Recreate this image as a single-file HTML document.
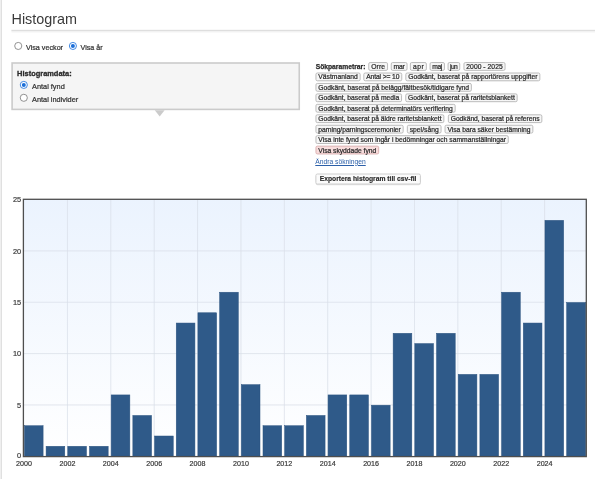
<!DOCTYPE html>
<html><head><meta charset="utf-8"><title>Histogram</title>
<style>
html,body{margin:0;padding:0;background:#fff;}
body{width:603px;height:479px;position:relative;overflow:hidden;font-family:"Liberation Sans",sans-serif;color:#333;}
#wrap{position:absolute;left:0;top:0;width:603px;height:479px;overflow:hidden;will-change:transform;transform:translateZ(0);}
#wrap div{position:absolute;white-space:nowrap;}
svg{position:absolute;left:0;top:0;}
.h{color:#3a3a3a;}
.t{color:#333;-webkit-text-stroke:0.22px #333;}
.lbl{font-weight:bold;color:#2a2a2a;-webkit-text-stroke:0.25px #2a2a2a;}
.tg{color:#2a2a2a;-webkit-text-stroke:0.22px #2a2a2a;}
.lnk{color:#2b5fa8;text-decoration:underline;}
.btn{font-weight:bold;color:#2a2a2a;-webkit-text-stroke:0.15px #2a2a2a;}
.xl{width:40px;text-align:center;font-size:7.15px;line-height:9px;color:#3a3a3a;-webkit-text-stroke:0.2px #3a3a3a;}
.yl{left:0;width:21.2px;text-align:right;font-size:7.4px;line-height:9px;color:#3a3a3a;-webkit-text-stroke:0.2px #3a3a3a;}
</style></head><body><div id="wrap">
<svg width="603" height="479" viewBox="0 0 603 479">
<rect x="0.5" y="0" width="1.5" height="479" fill="#e0e0e0"/>
<defs><linearGradient id="sh" x1="0" y1="0" x2="0" y2="1"><stop offset="0" stop-color="#efefef"/><stop offset="1" stop-color="#ffffff"/></linearGradient><linearGradient id="g" x1="0" y1="0" x2="0" y2="1"><stop offset="0" stop-color="#ebf3fe"/><stop offset="1" stop-color="#ffffff"/></linearGradient></defs>
<rect x="11.4" y="29.8" width="583.6" height="1.2" fill="#dedede"/>
<rect x="11.4" y="31" width="583.6" height="2.4" fill="url(#sh)"/>
<rect x="12.1" y="63.0" width="287.15" height="46.4" fill="#f5f5f5" stroke="#cbcbcb" stroke-width="1.6"/>
<path d="M154.8 110.3 L164.6 110.3 L159.7 116.4 Z" fill="#cbcbcb"/>
<circle cx="18.25" cy="45.95" r="3.55" fill="#fff" stroke="#808080" stroke-width="0.85"/>
<circle cx="72.9" cy="45.95" r="3.55" fill="#fff" stroke="#2f7de0" stroke-width="0.9"/><circle cx="72.9" cy="45.95" r="2.0" fill="#1b6ed8"/>
<circle cx="23.8" cy="84.9" r="3.55" fill="#fff" stroke="#2f7de0" stroke-width="0.9"/><circle cx="23.8" cy="84.9" r="2.0" fill="#1b6ed8"/>
<circle cx="23.8" cy="97.8" r="3.55" fill="#fff" stroke="#808080" stroke-width="0.85"/>
<rect x="368.75" y="62.55" width="18.80" height="7.80" rx="1.4" fill="#f6f6f6" stroke="#b4b4b4" stroke-width="0.9"/>
<rect x="391.25" y="62.55" width="15.80" height="7.80" rx="1.4" fill="#f6f6f6" stroke="#b4b4b4" stroke-width="0.9"/>
<rect x="410.35" y="62.55" width="16.00" height="7.80" rx="1.4" fill="#f6f6f6" stroke="#b4b4b4" stroke-width="0.9"/>
<rect x="430.05" y="62.55" width="14.40" height="7.80" rx="1.4" fill="#f6f6f6" stroke="#b4b4b4" stroke-width="0.9"/>
<rect x="448.05" y="62.55" width="11.70" height="7.80" rx="1.4" fill="#f6f6f6" stroke="#b4b4b4" stroke-width="0.9"/>
<rect x="463.95" y="62.55" width="41.10" height="7.80" rx="1.4" fill="#f6f6f6" stroke="#b4b4b4" stroke-width="0.9"/>
<rect x="315.95" y="73.00" width="44.20" height="7.80" rx="1.4" fill="#f6f6f6" stroke="#b4b4b4" stroke-width="0.9"/>
<rect x="363.85" y="73.00" width="37.90" height="7.80" rx="1.4" fill="#f6f6f6" stroke="#b4b4b4" stroke-width="0.9"/>
<rect x="405.85" y="73.00" width="134.00" height="7.80" rx="1.4" fill="#f6f6f6" stroke="#b4b4b4" stroke-width="0.9"/>
<rect x="315.95" y="83.45" width="155.40" height="7.80" rx="1.4" fill="#f6f6f6" stroke="#b4b4b4" stroke-width="0.9"/>
<rect x="315.95" y="93.90" width="85.60" height="7.80" rx="1.4" fill="#f6f6f6" stroke="#b4b4b4" stroke-width="0.9"/>
<rect x="405.75" y="93.90" width="111.40" height="7.80" rx="1.4" fill="#f6f6f6" stroke="#b4b4b4" stroke-width="0.9"/>
<rect x="315.95" y="104.35" width="139.20" height="7.80" rx="1.4" fill="#f6f6f6" stroke="#b4b4b4" stroke-width="0.9"/>
<rect x="315.95" y="114.80" width="127.90" height="7.80" rx="1.4" fill="#f6f6f6" stroke="#b4b4b4" stroke-width="0.9"/>
<rect x="448.35" y="114.80" width="93.50" height="7.80" rx="1.4" fill="#f6f6f6" stroke="#b4b4b4" stroke-width="0.9"/>
<rect x="315.95" y="125.25" width="87.20" height="7.80" rx="1.4" fill="#f6f6f6" stroke="#b4b4b4" stroke-width="0.9"/>
<rect x="407.35" y="125.25" width="33.70" height="7.80" rx="1.4" fill="#f6f6f6" stroke="#b4b4b4" stroke-width="0.9"/>
<rect x="445.05" y="125.25" width="87.80" height="7.80" rx="1.4" fill="#f6f6f6" stroke="#b4b4b4" stroke-width="0.9"/>
<rect x="315.95" y="135.70" width="192.30" height="7.80" rx="1.4" fill="#f6f6f6" stroke="#b4b4b4" stroke-width="0.9"/>
<rect x="315.95" y="146.15" width="62.70" height="7.80" rx="1.4" fill="#f8dddd" stroke="#d8abab" stroke-width="0.9"/>
<rect x="315.7" y="174.9" width="105.0" height="10.4" rx="1.8" fill="#e3e3e3"/>
<rect x="315.9" y="174.0" width="104.5" height="10.0" rx="1.5" fill="#fbfbfb" stroke="#cacaca" stroke-width="0.9"/>
<rect x="23.4" y="199.3" width="562.9" height="257.3" fill="url(#g)"/>
<g stroke="#d9dfe8" stroke-width="0.75" fill="none"><line x1="67.43" y1="199.5" x2="67.43" y2="456.5"/><line x1="110.81" y1="199.5" x2="110.81" y2="456.5"/><line x1="154.19" y1="199.5" x2="154.19" y2="456.5"/><line x1="197.57" y1="199.5" x2="197.57" y2="456.5"/><line x1="240.95" y1="199.5" x2="240.95" y2="456.5"/><line x1="284.33" y1="199.5" x2="284.33" y2="456.5"/><line x1="327.71" y1="199.5" x2="327.71" y2="456.5"/><line x1="371.09" y1="199.5" x2="371.09" y2="456.5"/><line x1="414.47" y1="199.5" x2="414.47" y2="456.5"/><line x1="457.85" y1="199.5" x2="457.85" y2="456.5"/><line x1="501.23" y1="199.5" x2="501.23" y2="456.5"/><line x1="544.61" y1="199.5" x2="544.61" y2="456.5"/><line x1="24" y1="404.95" x2="586" y2="404.95"/><line x1="24" y1="353.60" x2="586" y2="353.60"/><line x1="24" y1="302.25" x2="586" y2="302.25"/><line x1="24" y1="250.90" x2="586" y2="250.90"/></g>
<g fill="#2f5a89" stroke="#2b537f" stroke-width="0.5"><rect x="24.40" y="425.74" width="18.70" height="30.56"/><rect x="46.09" y="446.28" width="18.70" height="10.02"/><rect x="67.78" y="446.28" width="18.70" height="10.02"/><rect x="89.47" y="446.28" width="18.70" height="10.02"/><rect x="111.16" y="394.93" width="18.70" height="61.37"/><rect x="132.85" y="415.47" width="18.70" height="40.83"/><rect x="154.54" y="436.01" width="18.70" height="20.29"/><rect x="176.23" y="323.04" width="18.70" height="133.26"/><rect x="197.92" y="312.77" width="18.70" height="143.53"/><rect x="219.61" y="292.23" width="18.70" height="164.07"/><rect x="241.30" y="384.66" width="18.70" height="71.64"/><rect x="262.99" y="425.74" width="18.70" height="30.56"/><rect x="284.68" y="425.74" width="18.70" height="30.56"/><rect x="306.37" y="415.47" width="18.70" height="40.83"/><rect x="328.06" y="394.93" width="18.70" height="61.37"/><rect x="349.75" y="394.93" width="18.70" height="61.37"/><rect x="371.44" y="405.20" width="18.70" height="51.10"/><rect x="393.13" y="333.31" width="18.70" height="122.99"/><rect x="414.82" y="343.58" width="18.70" height="112.72"/><rect x="436.51" y="333.31" width="18.70" height="122.99"/><rect x="458.20" y="374.39" width="18.70" height="81.91"/><rect x="479.89" y="374.39" width="18.70" height="81.91"/><rect x="501.58" y="292.23" width="18.70" height="164.07"/><rect x="523.27" y="323.04" width="18.70" height="133.26"/><rect x="544.96" y="220.34" width="18.70" height="235.96"/><rect x="566.65" y="302.50" width="19.10" height="153.80"/></g>
<rect x="23.4" y="199.3" width="562.9" height="257.3" fill="none" stroke="#4e4e4e" stroke-width="1.3"/>
</svg>
<div class="h" style="left:11.50px;top:9.01px;font-size:14.4px;line-height:20px;">Histogram</div>
<div class="t" style="left:26.00px;top:42.51px;font-size:7.2px;line-height:10px;">Visa veckor</div>
<div class="t" style="left:80.60px;top:42.54px;font-size:7.1px;line-height:10px;">Visa år</div>
<div class="t" style="left:17.10px;top:69.42px;font-size:7.45px;line-height:10px;font-weight:bold;-webkit-text-stroke:0.3px #2a2a2a;color:#2a2a2a">Histogramdata:</div>
<div class="t" style="left:32.00px;top:82.45px;font-size:7.36px;line-height:10px;">Antal fynd</div>
<div class="t" style="left:32.00px;top:95.45px;font-size:7.36px;line-height:10px;">Antal individer</div>
<div class="lnk" style="left:315.30px;top:156.67px;font-size:6.73px;line-height:10px;">Ändra sökningen</div>
<div class="btn" style="left:315.80px;top:173.67px;font-size:6.73px;line-height:10px;width:104.6px;text-align:center">Exportera histogram till csv-fil</div>
<div class="lbl" style="left:315.70px;top:61.67px;font-size:6.73px;line-height:10px;letter-spacing:0.002px">Sökparametrar:</div>
<div class="tg" style="left:371.18px;top:61.67px;font-size:6.73px;line-height:10px;letter-spacing:0.166px">Orre</div>
<div class="tg" style="left:393.52px;top:61.67px;font-size:6.73px;line-height:10px;letter-spacing:-0.159px">mar</div>
<div class="tg" style="left:412.96px;top:61.67px;font-size:6.73px;line-height:10px;letter-spacing:0.527px">apr</div>
<div class="tg" style="left:432.21px;top:61.67px;font-size:6.73px;line-height:10px;letter-spacing:-0.376px">maj</div>
<div class="tg" style="left:450.07px;top:61.67px;font-size:6.73px;line-height:10px;letter-spacing:-0.656px">jun</div>
<div class="tg" style="left:466.32px;top:61.67px;font-size:6.73px;line-height:10px;letter-spacing:0.048px">2000 - 2025</div>
<div class="tg" style="left:318.31px;top:71.67px;font-size:6.73px;line-height:10px;letter-spacing:0.026px">Västmanland</div>
<div class="tg" style="left:366.15px;top:71.67px;font-size:6.73px;line-height:10px;letter-spacing:-0.107px">Antal &gt;= 10</div>
<div class="tg" style="left:408.21px;top:71.67px;font-size:6.73px;line-height:10px;letter-spacing:0.010px">Godkänt, baserat på rapportörens uppgifter</div>
<div class="tg" style="left:318.31px;top:82.67px;font-size:6.73px;line-height:10px;letter-spacing:0.011px">Godkänt, baserat på belägg/fältbesök/tidigare fynd</div>
<div class="tg" style="left:318.30px;top:92.67px;font-size:6.73px;line-height:10px;letter-spacing:-0.006px">Godkänt, baserat på media</div>
<div class="tg" style="left:408.10px;top:92.67px;font-size:6.73px;line-height:10px;letter-spacing:-0.004px">Godkänt, baserat på raritetsblankett</div>
<div class="tg" style="left:318.30px;top:103.67px;font-size:6.73px;line-height:10px;letter-spacing:-0.007px">Godkänt, baserat på determinatörs verifiering</div>
<div class="tg" style="left:318.29px;top:113.67px;font-size:6.73px;line-height:10px;letter-spacing:-0.010px">Godkänt, baserat på äldre raritetsblankett</div>
<div class="tg" style="left:450.69px;top:113.67px;font-size:6.73px;line-height:10px;letter-spacing:-0.017px">Godkänd, baserat på referens</div>
<div class="tg" style="left:318.28px;top:124.67px;font-size:6.73px;line-height:10px;letter-spacing:-0.045px">parning/parningsceremonier</div>
<div class="tg" style="left:409.71px;top:124.67px;font-size:6.73px;line-height:10px;letter-spacing:0.026px">spel/sång</div>
<div class="tg" style="left:447.40px;top:124.67px;font-size:6.73px;line-height:10px;letter-spacing:-0.003px">Visa bara säker bestämning</div>
<div class="tg" style="left:318.31px;top:134.67px;font-size:6.73px;line-height:10px;letter-spacing:0.010px">Visa inte fynd som ingår i bedömningar och sammanställningar</div>
<div class="tg" style="left:318.30px;top:145.67px;font-size:6.73px;line-height:10px;letter-spacing:-0.009px">Visa skyddade fynd</div>
<div class="xl" style="left:4.05px;top:459.8px">2000</div>
<div class="xl" style="left:47.43px;top:459.8px">2002</div>
<div class="xl" style="left:90.81px;top:459.8px">2004</div>
<div class="xl" style="left:134.19px;top:459.8px">2006</div>
<div class="xl" style="left:177.57px;top:459.8px">2008</div>
<div class="xl" style="left:220.95px;top:459.8px">2010</div>
<div class="xl" style="left:264.33px;top:459.8px">2012</div>
<div class="xl" style="left:307.71px;top:459.8px">2014</div>
<div class="xl" style="left:351.09px;top:459.8px">2016</div>
<div class="xl" style="left:394.47px;top:459.8px">2018</div>
<div class="xl" style="left:437.85px;top:459.8px">2020</div>
<div class="xl" style="left:481.23px;top:459.8px">2022</div>
<div class="xl" style="left:524.61px;top:459.8px">2024</div>
<div class="yl" style="top:450.70px">0</div>
<div class="yl" style="top:400.65px">5</div>
<div class="yl" style="top:349.30px">10</div>
<div class="yl" style="top:297.95px">15</div>
<div class="yl" style="top:246.60px">20</div>
<div class="yl" style="top:195.25px">25</div>
</div></body></html>
